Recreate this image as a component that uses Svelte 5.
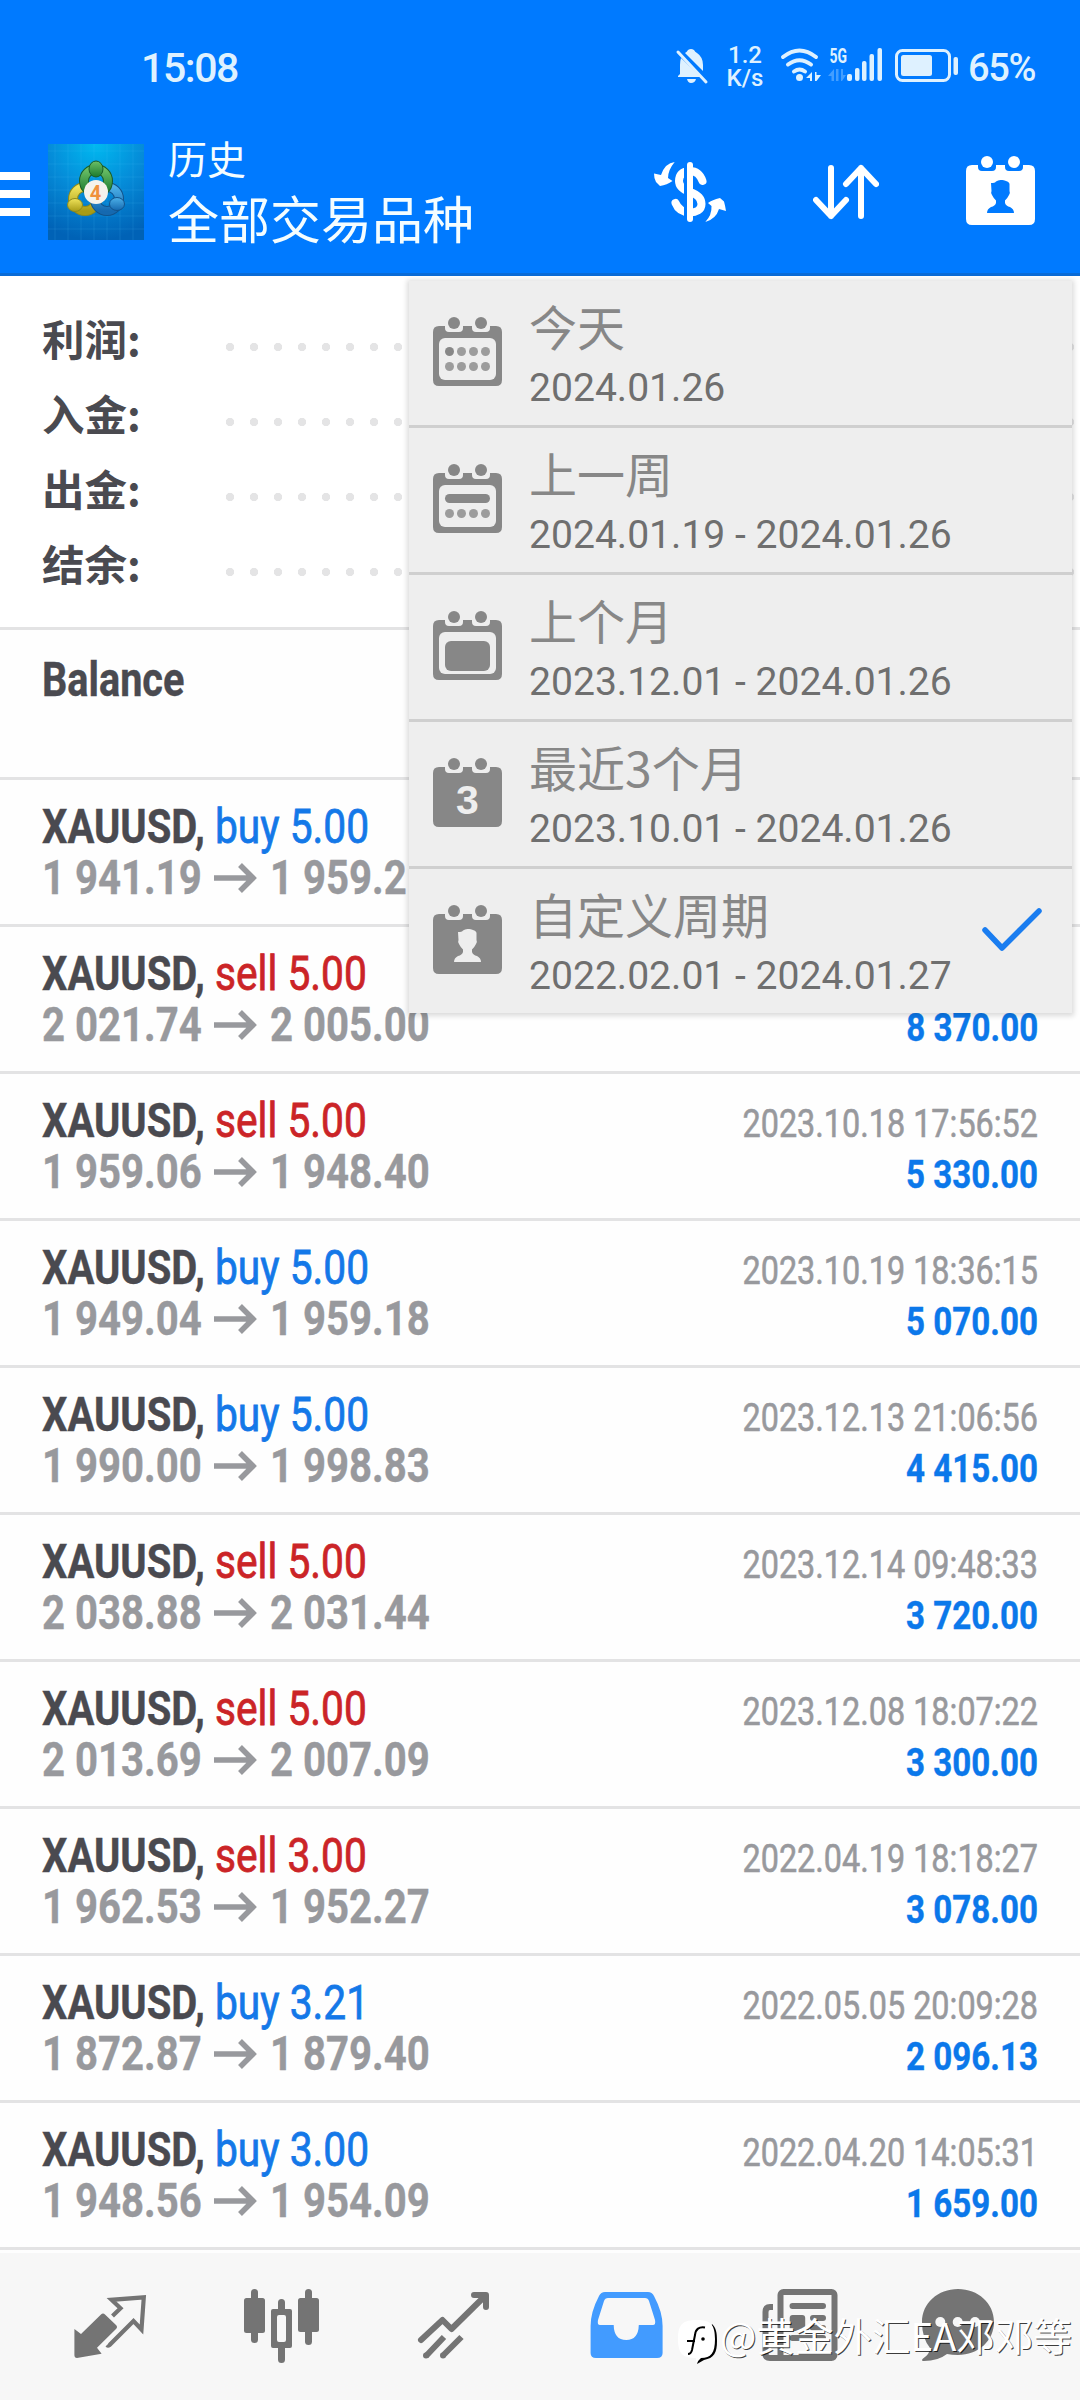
<script lang="ts">
    interface Deal {
        side: 'buy' | 'sell';
        volume: string;
        open: string;
        close: string;
        time?: string;
        profit?: string;
    }

    const summary = ['利润:', '入金:', '出金:', '结余:'];

    const deals: Deal[] = [
        { side: 'buy', volume: '5.00', open: '1 941.19', close: '1 959.2' },
        { side: 'sell', volume: '5.00', open: '2 021.74', close: '2 005.00', profit: '8 370.00' },
        { side: 'sell', volume: '5.00', open: '1 959.06', close: '1 948.40', time: '2023.10.18 17:56:52', profit: '5 330.00' },
        { side: 'buy', volume: '5.00', open: '1 949.04', close: '1 959.18', time: '2023.10.19 18:36:15', profit: '5 070.00' },
        { side: 'buy', volume: '5.00', open: '1 990.00', close: '1 998.83', time: '2023.12.13 21:06:56', profit: '4 415.00' },
        { side: 'sell', volume: '5.00', open: '2 038.88', close: '2 031.44', time: '2023.12.14 09:48:33', profit: '3 720.00' },
        { side: 'sell', volume: '5.00', open: '2 013.69', close: '2 007.09', time: '2023.12.08 18:07:22', profit: '3 300.00' },
        { side: 'sell', volume: '3.00', open: '1 962.53', close: '1 952.27', time: '2022.04.19 18:18:27', profit: '3 078.00' },
        { side: 'buy', volume: '3.21', open: '1 872.87', close: '1 879.40', time: '2022.05.05 20:09:28', profit: '2 096.13' },
        { side: 'buy', volume: '3.00', open: '1 948.56', close: '1 954.09', time: '2022.04.20 14:05:31', profit: '1 659.00' },
    ];

    const periods = [
        { icon: 'day', title: '今天', range: '2024.01.26' },
        { icon: 'week', title: '上一周', range: '2024.01.19 - 2024.01.26' },
        { icon: 'month', title: '上个月', range: '2023.12.01 - 2024.01.26' },
        { icon: 'three', title: '最近3个月', range: '2023.10.01 - 2024.01.26' },
        { icon: 'custom', title: '自定义周期', range: '2022.02.01 - 2024.01.27' },
    ];

    const tabs = ['quotes', 'chart', 'trade', 'history', 'news', 'chat'];
    let selected = $state('custom');
    let activeTab = $state('history');
</script>

{#snippet calendar(kind: string)}
    <svg class="calendar" width="69" height="69" viewBox="0 0 69 69">
        <path
            fill="currentColor"
            d="M6 9H12V11Q12 15 16 15H26Q30 15 30 11V9H39V11Q39 15 43 15H53Q57 15 57 11V9H63Q69 9 69 15V63Q69 69 63 69H6Q0 69 0 63V15Q0 9 6 9Z"
        />
        <circle cx="21" cy="6" r="6" fill="currentColor" />
        <circle cx="48" cy="6" r="6" fill="currentColor" />
        {#if kind === 'day' || kind === 'week' || kind === 'month'}
            <rect class="hole" x="6" y="21" width="57" height="42" rx="6" />
        {/if}
        {#if kind === 'day'}
            {#each [16.5, 28.5, 40.5, 52.5] as cx, i}
                <circle {cx} cy="34.5" r="4.5" fill="currentColor" opacity={i ? 0.8 : 1} />
            {/each}
        {/if}
        {#if kind === 'day' || kind === 'week'}
            {#each [16.5, 28.5, 40.5, 52.5] as cx}
                <circle {cx} cy="49.5" r="4.5" fill="currentColor" opacity="0.8" />
            {/each}
        {/if}
        {#if kind === 'week'}
            <rect x="12" y="30" width="45" height="9" rx="4.5" fill="currentColor" />
        {:else if kind === 'month'}
            <rect x="12" y="30" width="45" height="30" rx="6" fill="currentColor" />
        {:else if kind === 'three'}
            <text class="hole three" x="34.5" y="56" text-anchor="middle">3</text>
        {:else if kind === 'custom'}
            <path
                class="hole"
                d="M34.5 24C39 24 43.5 26 43.5 28V35Q44.5 37 43 39Q41 43 39 44.5V47Q40 50 44 51Q48 53 48 57H21Q21 53 25 51Q29 50 30 47V44.5Q28 43 26 39Q24.5 37 25.5 35L25 27Q29 27 30 25.5Q32 24 34.5 24Z"
            />
        {/if}
    </svg>
{/snippet}

<div class="screen">
    <header>
        <div class="status">
            <span class="clock">15:08</span>
            <svg width="284" height="60" viewBox="674 36 284 60" fill="#def1ff">
                <!-- muted bell -->
                <path d="M685 53Q687 52 688 50Q691 48 694 50Q695 52 697 53Q703 57 703 65V71ZM681 58L701 77H678V76L680 74V65Q680 61 681 58ZM687 79H696Q695 83 691 83Q688 83 687 79Z" />
                <path d="M678 52L706 82" stroke="#def1ff" stroke-width="3" stroke-linecap="round" />
                <text class="net" x="745" y="63" text-anchor="middle">1.2</text>
                <text class="net" x="745" y="85.500" text-anchor="middle">K/s</text>
                <!-- wifi -->
                <g fill="none" stroke="#def1ff" stroke-width="4" stroke-linecap="round">
                    <path d="M783 57Q799.500 44 816 57" />
                    <path d="M788 64.500Q799.500 56 811 64.500" />
                    <path d="M794 71.500Q799.500 67.500 805 71.500" />
                </g>
                <circle cx="799.500" cy="77.500" r="3.500" />
                <path d="M812 72V81H810V78H806ZM815 72H816.500V75H821L816.500 81H815Z" />
                <!-- mobile signal -->
                <text class="gen" x="829.500" y="62.500" textLength="17.500" lengthAdjust="spacingAndGlyphs">5G</text>
                <path opacity=".3" d="M834 69V81H831.500V76H828ZM836 69H838.500V81H836ZM841 69H843V75H846L842 81H841Z" />
                <rect x="847" y="74" width="5" height="7" rx="2" />
                <rect x="855" y="68" width="4.500" height="13" rx="2" />
                <rect x="862" y="61" width="4.500" height="20" rx="2" />
                <rect x="869.500" y="54" width="4.500" height="27" rx="2" />
                <rect x="877.500" y="48" width="4.500" height="33" rx="2" />
                <!-- battery -->
                <rect x="896.500" y="50.500" width="53" height="30" rx="6" fill="none" stroke="#def1ff" stroke-width="3" />
                <rect x="901" y="55" width="31" height="21" rx="2.500" />
                <rect x="953.500" y="57" width="4.500" height="18" rx="2" />
            </svg>
            <span class="charge">65%</span>
        </div>

        <div class="toolbar">
            <div class="menu-button"><i></i><i></i><i></i></div>
            <svg class="logo" width="96" height="96" viewBox="0 0 96 96">
                <defs>
                    <radialGradient id="sky" cx=".5" cy="0" r="1">
                        <stop offset="0" stop-color="#00b9f0" />
                        <stop offset=".5" stop-color="#058bd8" />
                        <stop offset="1" stop-color="#0062b6" />
                    </radialGradient>
                    <linearGradient id="green" x2="0" y2="1"><stop stop-color="#6cc067" /><stop offset="1" stop-color="#1b7a2e" /></linearGradient>
                    <linearGradient id="yellow" x2="0" y2="1"><stop stop-color="#efe35a" /><stop offset="1" stop-color="#a89b16" /></linearGradient>
                    <linearGradient id="blue" x2="0" y2="1"><stop stop-color="#4cb0e8" /><stop offset="1" stop-color="#1569b0" /></linearGradient>
                </defs>
                <rect width="96" height="96" fill="url(#sky)" />
                <path d="M7 0V96M20 0V96M33 0V96M46 0V96M59 0V96M72 0V96M85 0V96M0 7H96M0 20H96M0 33H96M0 46H96M0 59H96M0 72H96M0 85H96" stroke="#5cc8ff" stroke-opacity=".14" />
                <g fill="none" stroke-width="8">
                    <circle cx="37" cy="55" r="12" stroke="#8d8a1c" stroke-width="10" />
                    <circle cx="37" cy="55" r="12" stroke="url(#yellow)" />
                    <circle cx="59" cy="55" r="12" stroke="#12538c" stroke-width="10" />
                    <circle cx="59" cy="55" r="12" stroke="url(#blue)" />
                    <circle cx="48" cy="37" r="12" stroke="#1b5c28" stroke-width="10" />
                    <circle cx="48" cy="37" r="12" stroke="url(#green)" />
                </g>
                <ellipse cx="48" cy="25" rx="7" ry="8" fill="url(#green)" stroke="#1b5c28" />
                <ellipse cx="27" cy="61" rx="7.500" ry="6.500" fill="url(#yellow)" stroke="#8d8a1c" />
                <ellipse cx="69" cy="60" rx="7.500" ry="6.500" fill="url(#blue)" stroke="#12538c" />
                <circle cx="48" cy="48" r="12" fill="#f5f2ec" />
                <text class="four" x="47.500" y="55.500" text-anchor="middle">4</text>
            </svg>
            <div class="heading">
                <div class="title">历史</div>
                <div class="subtitle">全部交易品种</div>
            </div>
            <div class="actions">
                <svg width="72" height="60" viewBox="0 0 72 60">
                    <path d="M48.500 19Q45 9 36 9C28 9 25 13 25 19S30 28 36 30S47.500 36 47.500 42S42 50.500 36 50.500Q25 50 21.500 41" fill="none" stroke="#fff" stroke-width="8" stroke-linecap="round" />
                    <rect x="30" width="3" height="60" fill="#007aff" />
                    <rect x="33" width="6" height="60" rx="3" fill="#fff" />
                    <path d="M20.700 0Q11 1 7 13L0 11.500Q0 17 2 20L6 24Q13 23 18.500 19L14 16Q14 8 20.700 0ZM51.300 60Q58 53 57.500 44L54 41Q58 38 66 36L70 39.500Q71 43 72 49L65 47Q62 57 51.300 60Z" fill="#fff" />
                </svg>
                <svg width="66" height="57" viewBox="0 0 66 57" fill="none" stroke="#fff" stroke-width="6" stroke-linecap="round" stroke-linejoin="round">
                    <path d="M18 4V52M3 36L18 52L33 36M48 52V4M33 20L48 4L63 20" />
                </svg>
                {@render calendar('custom')}
            </div>
        </div>
    </header>

    <section class="summary">
        {#each summary as label}
            <div class="line">
                <span>{label}</span>
                <div class="dots"></div>
            </div>
        {/each}
    </section>

    <div class="row balance">
        <div class="name"><b class="condensed">Balance</b></div>
    </div>

    {#each deals as deal}
        <div class="row">
            <div class="left">
                <div class="name">
                    <b class="condensed symbol">XAUUSD,</b>
                    <span class="condensed {deal.side}">{deal.side} {deal.volume}</span>
                </div>
                <div class="prices">
                    <span class="condensed">{deal.open}</span>
                    <svg width="43" height="30" viewBox="0 0 43 30" fill="none" stroke="#98999d" stroke-width="5.500">
                        <path d="M0 15H39M26 2L39 15L26 28" />
                    </svg>
                    <span class="condensed">{deal.close}</span>
                </div>
            </div>
            <div class="right">
                <div class="condensed time">{deal.time ?? ''}</div>
                <div class="condensed profit">{deal.profit ?? ''}</div>
            </div>
        </div>
    {/each}

    <nav>
        {#each tabs as tab, i}
            <svg class:active={tab === activeTab} width="172" height="147" viewBox="{24 + 172 * i} 23 172 147" fill="currentColor">
                {#if tab === 'quotes'}
                    <path d="M74.400 99L81 104L101 84.500Q103 82.500 105 84.500L116 95Q118 97 116 99L97 117.700L101.600 123.700L77 128Q74.400 128 74.400 125Z" />
                    <path d="M112.500 86L120.500 78.300L111.500 69.800L143.800 67.300L141.500 99.500L133.500 91L109.500 115Q108 116 107 115" fill="none" stroke="currentColor" stroke-width="4.200" />
                {:else if tab === 'chart'}
                    <rect x="244" y="68" width="21" height="35" rx="2.500" />
                    <rect x="251" y="59" width="7" height="54" rx="3.500" />
                    <path fill-rule="evenodd" d="M273 79H290Q292 79 292 81V116Q292 118 290 118H273Q271 118 271 116V81Q271 79 273 79ZM279 85Q277 85 277 87V110Q277 112 279 112H284Q286 112 286 110V87Q286 85 284 85Z" />
                    <path d="M278 80V72.500Q278 69 281.500 69T285 72.500V80ZM278 117V129.500Q278 133 281.500 133T285 129.500V117Z" />
                    <rect x="298" y="68" width="21" height="34" rx="2.500" />
                    <rect x="305" y="59" width="7" height="56" rx="3.500" />
                {:else if tab === 'trade'}
                    <g fill="none" stroke="currentColor" stroke-width="6" stroke-linejoin="round">
                        <path stroke-linecap="round" d="M421 110L442.500 90L451.500 99L485.500 65.500M474 65H486V77" />
                        <path d="M444 107L426 126M461.500 107L442.500 126" />
                    </g>
                    <circle cx="426" cy="125.500" r="3" />
                    <circle cx="443" cy="125.500" r="3" />
                {:else if tab === 'history'}
                    <path
                        fill-rule="evenodd"
                        d="M605 62H648Q652 62 654 66Q662.600 82 662.600 96V123Q662.600 128 657 128H596Q590.600 128 590.600 123V96Q590.600 82 599 66Q601 62 605 62ZM608 68Q605 68 604 71L598 90Q597 95 600 95H613.700Q614 110 626.200 110T638.800 95H653Q656 95 655 90L649 71Q648 68 645 68Z"
                    />
                {:else if tab === 'news'}
                    <g fill="none" stroke="currentColor" stroke-width="6">
                        <rect x="780.500" y="62" width="54" height="66" rx="3" />
                        <path d="M773 77H770Q765.500 77 765.500 82V124Q765.500 128 770 128H785" />
                        <path d="M792.500 76H823M813 88H823M813 98H823M792.500 108H823" stroke-linecap="round" />
                    </g>
                    <rect x="789.700" y="85" width="15.500" height="16" rx="3" />
                {:else}
                    <path d="M958 59C978 59 994 73 994 92S978 125 958 125Q952 125 947 124Q938 131 924 131Q921 131 922.500 129Q930 124 930 118Q922 108 922 92C922 73 938 59 958 59Z" />
                    <g fill="#f7f7f7">
                        <circle cx="940.300" cy="92" r="5" />
                        <circle cx="957.700" cy="92" r="5" />
                        <circle cx="975" cy="92" r="5" />
                    </g>
                {/if}
            </svg>
        {/each}
    </nav>

    <div class="dropdown">
        {#each periods as period}
            <div class="item">
                {@render calendar(period.icon)}
                <div class="text">
                    <div class="period">{period.title}</div>
                    <div class="range">{period.range}</div>
                </div>
                {#if period.icon === selected}
                    <svg class="check" width="60" height="44" viewBox="0 0 60 44" fill="none" stroke="#1a7df0" stroke-width="5.500" stroke-linecap="round" stroke-linejoin="round">
                        <path d="M3 22L20 40L57 3" />
                    </svg>
                {/if}
            </div>
        {/each}
    </div>

    <div class="watermark">
        <svg width="40" height="46" viewBox="0 0 40 46">
            <path d="M34 4C38 8 39 12 39 21C39 33 36 38 26 40L19 44L21 38" fill="#000" />
            <path d="M19 0C33 0 37 5 37 19C37 33 33 38 23 38L18 43V38C5 38 0 34 0 19C0 4 5 0 19 0Z" fill="#fff" />
            <path d="M27 7.500Q18 6 17 15L14 30Q13 34 10 34M9 21H17" fill="none" stroke="#000" stroke-width="2" />
            <circle cx="25" cy="19" r="1.800" fill="#000" />
        </svg>
        <span>@黄金外汇EA邓邓等</span>
    </div>
</div>

<style>
    :global(body) {
        margin: 0;
        background: #fff;
    }
    .screen {
        position: relative;
        width: 1080px;
        height: 2400px;
        overflow: hidden;
        background: #fefefe;
        font-family: Roboto, "Noto Sans CJK SC", sans-serif;
    }
    svg {
        display: block;
        flex: none;
    }
    header {
        box-sizing: border-box;
        height: 276px;
        background: #007aff;
        border-bottom: 3px solid #0a6bd6;
    }
    .status {
        display: flex;
        align-items: center;
        height: 132px;
        padding: 0 43px 0 141px;
        color: #def1ff;
    }
    .clock {
        flex: 1;
        padding-top: 3px;
        font-size: 41px;
        font-weight: 500;
        letter-spacing: -1.4px;
    }
    .charge {
        width: 69px;
        margin-left: 10px;
        padding-top: 3px;
        font-size: 38px;
        font-weight: 500;
        letter-spacing: -1.4px;
    }
    .net {
        font-size: 24px;
        font-weight: 500;
    }
    .gen {
        font-size: 20px;
        font-weight: 700;
    }
    .toolbar {
        display: flex;
        align-items: center;
        height: 120px;
    }
    .menu-button {
        display: flex;
        flex-direction: column;
        gap: 10px;
        width: 30px;
        margin-right: 18px;
        padding-top: 4px;
    }
    .menu-button i {
        height: 8px;
        background: #fff;
    }
    .four {
        font: bold 20px Roboto, sans-serif;
        fill: #f0913c;
    }
    .heading {
        flex: 1;
        padding: 0 0 4px 24px;
        color: #f4fdff;
        font-family: "Noto Sans CJK SC", sans-serif;
    }
    .title {
        font-size: 39px;
        line-height: 54px;
    }
    .subtitle {
        font-size: 51px;
        line-height: 66px;
    }
    .actions {
        display: flex;
        align-items: center;
        gap: 87px;
        padding-right: 45px;
        color: #fff;
    }
    .actions .calendar {
        margin-bottom: 3px;
    }
    .actions .hole {
        fill: #007aff;
    }
    .summary {
        box-sizing: border-box;
        height: 354px;
        padding: 24px 0 27px;
        border-bottom: 3px solid #e3e3e4;
        background: #fff;
    }
    .line {
        display: flex;
        align-items: center;
        height: 75px;
        padding-left: 42px;
        color: #4a4a50;
        font: bold 42.500px/75px "Noto Sans CJK SC", sans-serif;
    }
    .line span {
        width: 176px;
    }
    .dots {
        flex: 1;
        height: 24px;
        margin-top: 19px;
        background: radial-gradient(circle, #e4e4e5 3.800px, transparent 4.500px) 0 0 / 24px 24px;
    }
    .row {
        box-sizing: border-box;
        display: flex;
        justify-content: space-between;
        height: 147px;
        padding: 21px 42px 0;
        border-bottom: 3px solid #e3e3e4;
    }
    .balance {
        height: 150px;
        padding-top: 24px;
    }
    .balance .condensed {
        transform: scaleX(0.825);
    }
    .condensed {
        display: inline-block;
        transform: scaleX(0.84);
        transform-origin: left;
        white-space: pre;
        -webkit-text-stroke: 0.4px currentColor;
    }
    .name,
    .prices {
        display: flex;
        align-items: center;
        height: 51px;
        color: #4a4a50;
        font-size: 48px;
        line-height: 51px;
        white-space: pre;
    }
    .symbol {
        width: 173px;
        transform: scaleX(0.833);
    }
    .buy,
    .sell {
        transform: scaleX(0.848);
        -webkit-text-stroke-width: 0.8px;
    }
    .buy {
        color: #1478e8;
    }
    .sell {
        color: #cb2427;
    }
    .prices {
        color: #98999d;
        font-weight: 700;
    }
    .prices .condensed {
        transform: scaleX(0.836);
    }
    .prices .condensed:first-child {
        width: 172px;
    }
    .prices svg {
        margin-right: 13px;
    }
    .right {
        text-align: right;
        font-size: 39px;
        line-height: 51px;
        padding-top: 4px;
    }
    .right .condensed {
        display: block;
        height: 51px;
        transform-origin: right;
    }
    .right .time {
        color: #98999d;
        transform: scaleX(0.83);
        -webkit-text-stroke-width: 0.6px;
    }
    .right .profit {
        color: #0b78ea;
        font-weight: 700;
        transform: scaleX(0.85);
    }
    nav {
        display: flex;
        height: 147px;
        margin-top: 3px;
        padding-left: 24px;
        background: #f7f7f7;
        color: #747474;
    }
    nav .active {
        color: #429bff;
    }
    .dropdown {
        position: absolute;
        top: 281px;
        left: 409px;
        width: 663px;
        background: #eee;
        box-shadow: 0 1px 5px 2px rgba(0, 0, 0, 0.14);
        color: #878787;
    }
    .item {
        box-sizing: border-box;
        display: flex;
        align-items: flex-start;
        height: 147px;
        padding: 0 30px 0 24px;
        border-bottom: 3px solid #cfcfcf;
    }
    .item:last-child {
        height: 144px;
        border-bottom: 0;
    }
    .item .calendar {
        margin-top: 36px;
    }
    .hole {
        fill: #eee;
    }
    .three {
        font: bold 41px "Liberation Sans", sans-serif;
    }
    .text {
        flex: 1;
        padding-left: 27px;
    }
    .period {
        height: 79px;
        font: 400 48px/89px "Noto Sans CJK SC", sans-serif;
        white-space: nowrap;
    }
    .range {
        color: #6f6f6f;
        font-size: 39.100px;
        line-height: 56px;
        white-space: nowrap;
    }
    .check {
        margin-top: 39px;
    }
    .watermark {
        position: absolute;
        left: 678px;
        top: 2310px;
        display: flex;
        align-items: flex-start;
        gap: 2px;
        color: #fff;
        font: 400 38.500px/48px "Noto Sans CJK SC", sans-serif;
        text-shadow: 1px 1px 0 rgba(0, 0, 0, 0.75);
        white-space: nowrap;
    }
    .watermark svg {
        margin-top: 10px;
    }
</style>
